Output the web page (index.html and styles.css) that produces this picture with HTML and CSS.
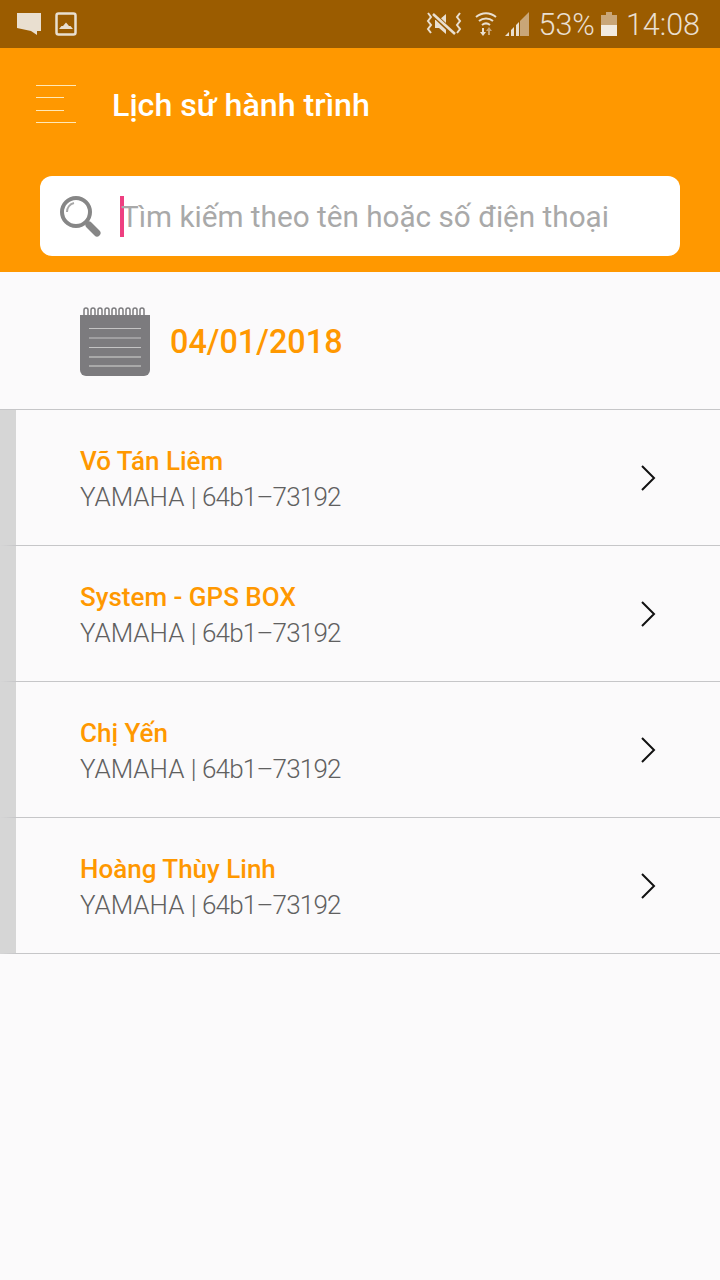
FILE: index.html
```html
<!DOCTYPE html>
<html lang="vi">
<head>
  <meta charset="UTF-8">
  <title>Lịch sử hành trình</title>
  <link rel="stylesheet" href="styles.css">
</head>
<body>
  <div class="status-bar">
    <div class="status-left">
      <svg width="25" height="24" viewBox="0 0 25 24"><path d="M0 1h24v18h-4v4l-6-4L0 16z" fill="#e9dfd0"/></svg>
      <svg width="22" height="24" viewBox="0 0 22 24"><rect x="1.500" y="1.500" width="19" height="21" rx="2" fill="none" stroke="#e9dfd0" stroke-width="2.500"/><path d="M4 17l2.500-3 1.500 0 3-3.500 3 3.500 1.500 0 2.500 3z" fill="#e9dfd0"/></svg>
    </div>
    <div class="status-right">
      <svg class="ic-mute" width="38" height="26" viewBox="0 0 38 26"><g fill="none" stroke="#e9dfd0" stroke-width="2"><path d="M3 2l3 4-3 4 3 4-3 4 3 4"/><path d="M35 2l-3 4 3 4-3 4 3 4-3 4"/></g><path d="M10 9h4l7-6v20l-7-6h-4z" fill="#e9dfd0"/><path d="M8 3l22 21" stroke="#9b5c00" stroke-width="5"/><path d="M8 3l22 20" stroke="#e9dfd0" stroke-width="2.500"/></svg>
      <svg class="ic-wifi" width="22" height="26" viewBox="0 0 22 26"><g fill="none" stroke="#e9dfd0" stroke-width="2"><path d="M1 6c6-5 14-5 20 0"/><path d="M4 10c4-3.500 10-3.500 14 0"/><path d="M7 14c2.500-2 5.500-2 8 0"/></g><path d="M7 17h2v4h2l-3 4-3-4h2z" fill="#e9dfd0"/><path d="M14 16l3 4h-2v4h-2v-4h-2z" fill="#c9a678"/></svg>
      <svg class="ic-signal" width="24" height="24" viewBox="0 0 24 24"><path d="M15 24V9L24 0v24z" fill="#c9a678"/><path d="M0 24l4-4v4zM6 24v-6l3-3v9zM11 24V13l3-3v14z" fill="#e9dfd0"/></svg>
      <span class="status-text pct">53%</span>
      <svg class="ic-batt" width="16" height="24" viewBox="0 0 16 24"><path d="M5 0h6v3h5v10H0V3h5z" fill="#c9a678"/><path d="M0 13h16v11H0z" fill="#f2ebe0"/></svg>
      <span class="status-text">14:08</span>
    </div>
  </div>

  <header class="app-header">
    <div class="title-row">
      <div class="menu-icon">
        <span></span>
        <span class="short"></span>
        <span class="short"></span>
        <span></span>
      </div>
      <h1>Lịch sử hành trình</h1>
    </div>
    <div class="search-box">
      <svg class="search-icon" width="42" height="42" viewBox="0 0 42 42">
        <circle cx="17" cy="17" r="14" fill="#fff" stroke="#868686" stroke-width="4"/>
        <path d="M8 17a9 9 0 0 1 7-9" fill="none" stroke="#a8a8a8" stroke-width="2"/>
        <path d="M30 30l8 8" stroke="#868686" stroke-width="7" stroke-linecap="round"/>
      </svg>
      <div class="search-input">
        <span class="caret"></span>
        <span class="placeholder">Tìm kiếm theo tên hoặc số điện thoại</span>
      </div>
    </div>
  </header>

  <div class="date-row">
    <svg width="70" height="70" viewBox="0 0 70 70">
      <path d="M0 9h70v55a6 6 0 0 1-6 6H6a6 6 0 0 1-6-6z" fill="#7c7b7e"/>
      <g fill="none" stroke="#7c7b7e" stroke-width="1.500">
        <path d="M4 9V4a2 2 0 0 1 4 0v5"/><path d="M11 9V4a2 2 0 0 1 4 0v5"/><path d="M18 9V4a2 2 0 0 1 4 0v5"/><path d="M25 9V4a2 2 0 0 1 4 0v5"/><path d="M32 9V4a2 2 0 0 1 4 0v5"/><path d="M39 9V4a2 2 0 0 1 4 0v5"/><path d="M46 9V4a2 2 0 0 1 4 0v5"/><path d="M53 9V4a2 2 0 0 1 4 0v5"/><path d="M60 9V4a2 2 0 0 1 4 0v5"/>
      </g>
      <g stroke="#c4c4c4" stroke-width="1">
        <path d="M9 22.500h52M9 32h52M9 41.500h52"/>
        <path d="M9 51h52M9 60h52" stroke="#a9a9a9" stroke-width="2"/>
      </g>
    </svg>
    <span class="date-text">04/01/2018</span>
  </div>

  <ul class="trip-list">
    <li class="trip-row">
      <div class="trip-info">
        <div class="trip-name">Võ Tán Liêm</div>
        <div class="trip-desc">YAMAHA | <span class="plate">64b1–73192</span></div>
      </div>
      <svg class="chevron" width="16" height="26" viewBox="0 0 16 26"><path d="M2 1l12 12L2 25" fill="none" stroke="#111" stroke-width="2"/></svg>
    </li>
    <li class="trip-row">
      <div class="trip-info">
        <div class="trip-name">System - GPS BOX</div>
        <div class="trip-desc">YAMAHA | <span class="plate">64b1–73192</span></div>
      </div>
      <svg class="chevron" width="16" height="26" viewBox="0 0 16 26"><path d="M2 1l12 12L2 25" fill="none" stroke="#111" stroke-width="2"/></svg>
    </li>
    <li class="trip-row">
      <div class="trip-info">
        <div class="trip-name">Chị Yến</div>
        <div class="trip-desc">YAMAHA | <span class="plate">64b1–73192</span></div>
      </div>
      <svg class="chevron" width="16" height="26" viewBox="0 0 16 26"><path d="M2 1l12 12L2 25" fill="none" stroke="#111" stroke-width="2"/></svg>
    </li>
    <li class="trip-row">
      <div class="trip-info">
        <div class="trip-name">Hoàng Thùy Linh</div>
        <div class="trip-desc">YAMAHA | <span class="plate">64b1–73192</span></div>
      </div>
      <svg class="chevron" width="16" height="26" viewBox="0 0 16 26"><path d="M2 1l12 12L2 25" fill="none" stroke="#111" stroke-width="2"/></svg>
    </li>
  </ul>
</body>
</html>
```

FILE: styles.css
```css
* { box-sizing: border-box; }
html, body { height: 100%; }
body { margin: 0; background: #fbfafb; font-family: Roboto, sans-serif; overflow: hidden; }

.status-bar { height: 48px; background: #9b5c00; display: flex; justify-content: space-between; align-items: center; padding: 0 20px 0 17px; color: #e9dfd0; }
.status-left { display: flex; align-items: center; gap: 13px; }
.status-right { display: flex; align-items: center; }
.status-text { font-size: 30.5px; line-height: 48px; font-weight: 300; padding-top: 1px; }
.ic-mute { margin-right: 12px; }
.ic-wifi { margin-right: 8px; }
.ic-signal { margin-right: 10px; }
.ic-batt { margin: 0 9px 0 6px; }

.app-header { height: 224px; background: #ff9800; padding: 0 40px; }
.title-row { height: 128px; display: flex; align-items: flex-start; }
.menu-icon { width: 40px; height: 38px; margin: 37px 0 0 -4px; display: flex; flex-direction: column; justify-content: space-between; }
.menu-icon span { display: block; height: 1px; background: #ffe9b8; }
.menu-icon .short { width: 28px; }
.title-row h1 { margin: 37px 0 0 36px; font-size: 32.200px; line-height: 40px; font-weight: 500; color: #fff; }

.search-box { height: 80px; background: #fff; border-radius: 12px; display: flex; align-items: center; padding-left: 19px; }
.search-icon { flex: none; }
.search-input { margin-left: 19px; display: flex; align-items: center; }
.caret { width: 4px; height: 41px; background: #ee3f80; }
.placeholder { font-size: 29.700px; line-height: 40px; color: #a9a9a9; margin: 2px 0 0 -3px; white-space: nowrap; }

.date-row { height: 138px; display: flex; align-items: center; padding-left: 80px; border-bottom: 1px solid #c6c6c8; }
.date-text { margin: 2px 0 0 20px; font-size: 32.400px; font-weight: 500; color: #ff9800; }

.trip-list { list-style: none; margin: 0; padding: 0; }
.trip-row { height: 136px; display: flex; align-items: center; justify-content: space-between; padding: 0 64px; border-left: 16px solid #d6d6d6; border-bottom: 1px solid #c6c6c8; }
.trip-info { padding-top: 3px; }
.trip-name { font-size: 26px; line-height: 36px; font-weight: 500; color: #ff9800; }
.trip-desc { font-size: 26px; line-height: 36px; font-weight: 300; color: #606060; }
.plate { letter-spacing: -0.8px; margin-left: -1px; }
```
